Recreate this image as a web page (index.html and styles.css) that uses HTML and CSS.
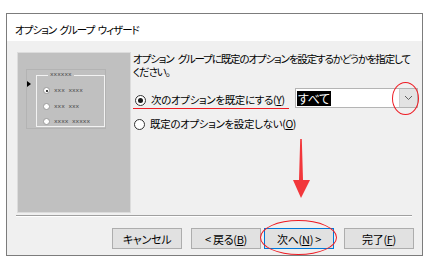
FILE: index.html
```html
<!DOCTYPE html>
<html lang="ja">
<head>
    <meta charset="UTF-8">
    <meta name="viewport" content="width=device-width, initial-scale=1.0">
    <title>オプション グループ ウィザード</title>
    <link rel="stylesheet" href="styles.css">
</head>
<body>
    <div class="window">
        <div class="titlebar">オプション グループ ウィザード</div>

        <div class="main">
            <!-- プレビュー -->
            <div class="preview">
                <div class="mini-wrap">
                    <span class="mini-arrow"></span>
                    <fieldset class="mini-group">
                        <legend>xxxxxx</legend>
                        <div class="mini-row"><span class="mini-radio checked"></span>xxx xxxx</div>
                        <div class="mini-row"><span class="mini-radio"></span>xxx xxx</div>
                        <div class="mini-row"><span class="mini-radio"></span>xxxx xxxxx</div>
                    </fieldset>
                </div>
            </div>

            <div class="panel">
                <p class="desc">オプション&nbsp;グループに既定のオプションを設定するかどうかを指定して<br>ください。</p>

                <div class="option-row first">
                    <label class="option marked">
                        <span class="radio checked"></span>
                        <span class="option-text">次のオプションを既定にする(<u>Y</u>)</span>
                    </label>
                    <div class="combo">
                        <div class="combo-field"><span class="selected">すべて</span></div>
                        <div class="combo-btn">
                            <svg width="9" height="6" viewBox="0 0 9 6"><polyline points="1,1 4.5,4.5 8,1" fill="none" stroke="#606060" stroke-width="1"/></svg>
                        </div>
                    </div>
                </div>

                <div class="option-row second">
                    <label class="option">
                        <span class="radio"></span>
                        <span class="option-text">既定のオプションを設定しない(<u>O</u>)</span>
                    </label>
                </div>
            </div>
        </div>

        <div class="separator"></div>

        <div class="buttons">
            <button class="btn cancel">キャンセル</button>
            <button class="btn back">&lt; 戻る(<u>B</u>)</button>
            <button class="btn next">次へ(<u>N</u>) &gt;</button>
            <button class="btn finish">完了(<u>F</u>)</button>
        </div>

        <!-- 注釈 -->
        <svg class="mark-arrow" width="22" height="62" viewBox="0 0 22 62">
            <path d="M10.2 1 L11.8 1 L13 42 L20 42 L11 60 L3 42 L9 42 Z" fill="#f2373b"/>
        </svg>
        <div class="mark-ring ring-combo"></div>
        <div class="mark-ring ring-next"></div>
    </div>
</body>
</html>
```

FILE: styles.css
```css
* {
    margin: 0;
    padding: 0;
    box-sizing: border-box;
}

body {
    background: #fff;
    font-family: "Noto Sans CJK JP", "Noto Sans", sans-serif;
    font-feature-settings: "palt";
    color: #000;
}

.window {
    position: relative;
    width: 417px;
    height: 243px;
    margin: 13px 0 0 6px;
    border: 1px solid #7c7c7c;
    background: #f0f0f0;
}

.titlebar {
    height: 27px;
    background: #fff;
    font-size: 10.5px;
    padding: 8px 0 0 8px;
    letter-spacing: -1px;
    word-spacing: 2px;
}

.main {
    display: flex;
    height: 174px;
    padding: 11px 0 0 10px;
}

/* プレビュー */
.preview {
    flex-shrink: 0;
    width: 114px;
    height: 161px;
    background: #c0c0c0;
    border: 1px solid #dcdcdc;
    padding: 16px 0 0 8px;
}

.mini-wrap {
    display: flex;
    width: 80px;
    height: 60px;
    border: 1px solid #b3b3b3;
}

.mini-arrow {
    width: 0;
    height: 0;
    margin: 11px 5px 0 0;
    border-left: 4px solid #000;
    border-top: 3px solid transparent;
    border-bottom: 3px solid transparent;
}

.mini-group {
    width: 69px;
    height: 55px;
    margin-top: 2px;
    border: 1px solid #f2f2f2;
    padding: 5px 0 0 6px;
    font-family: "Liberation Mono", monospace;
    font-size: 6px;
    color: #3a3a3a;
}

.mini-group legend {
    margin-left: 5px;
    padding: 0 2px;
    line-height: 6px;
}

.mini-row {
    display: flex;
    align-items: center;
    height: 15.5px;
    gap: 4px;
}

.mini-radio {
    width: 7px;
    height: 7px;
    border-radius: 50%;
    background: #fff;
    border: 1px solid #9a9a9a;
    position: relative;
}

.mini-radio.checked::after {
    content: "";
    position: absolute;
    left: 1.5px;
    top: 1.5px;
    width: 2px;
    height: 2px;
    border-radius: 50%;
    background: #000;
}

/* 右側 */
.panel {
    flex: 1;
    min-width: 0;
    padding: 0 4px 0 2px;
    font-size: 10.5px;
}

.desc {
    line-height: 13px;
    letter-spacing: -1.15px;
    word-spacing: 3px;
    white-space: nowrap;
}

.option-row {
    display: flex;
    align-items: center;
}

.option-row.first {
    margin-top: 10px;
    height: 20px;
}

.option-row.second {
    margin-top: 9px;
    height: 14px;
}

.option {
    display: flex;
    align-items: center;
    gap: 5px;
    line-height: 14px;
    white-space: nowrap;
}

.option-text {
    letter-spacing: -0.35px;
}

.option.marked {
    padding: 3px 4px 1px 1px;
    margin-top: 3px;
    border-bottom: 1.5px solid #ee1c24;
}

.radio {
    width: 11px;
    height: 11px;
    border-radius: 50%;
    border: 1px solid #333;
    background: #fff;
    position: relative;
    margin-left: 1px;
}

.radio.checked::after {
    content: "";
    position: absolute;
    left: 2px;
    top: 2px;
    width: 5px;
    height: 5px;
    border-radius: 50%;
    background: #1a1a1a;
}

.combo {
    display: flex;
    flex-shrink: 0;
    margin-left: auto;
    width: 123px;
    height: 20px;
    border: 1px solid #b4b4b4;
    background: #fff;
}

.combo-field {
    flex: 1;
    padding: 1px 0 0 1px;
    font-size: 12px;
}

.selected {
    display: inline-block;
    background: #000;
    color: #fff;
    line-height: 15px;
    padding: 0 1px;
    letter-spacing: -0.4px;
}

.combo-btn {
    width: 18px;
    background: #e3e3e3;
    border-left: 1px solid #cfcfcf;
    display: flex;
    align-items: center;
    justify-content: center;
}

.separator {
    height: 2px;
    margin: 0 10px 0 9px;
    border-top: 1px solid #a0a0a0;
    border-bottom: 1px solid #fff;
}

.buttons {
    display: flex;
    justify-content: flex-end;
    padding: 11px 8px 0 0;
}

.btn {
    width: 70px;
    height: 21px;
    border: 1px solid #adadad;
    background: #e1e1e1;
    font-family: "Noto Sans CJK JP", "Noto Sans", sans-serif;
    font-feature-settings: "palt";
    font-size: 11px;
    letter-spacing: -0.3px;
    color: #000;
}

.back {
    margin-left: 9px;
}

.next {
    margin-left: 3px;
    border-color: #0078d7;
}

.finish {
    margin-left: 10px;
}

/* 注釈 */
.mark-arrow {
    position: absolute;
    left: 283px;
    top: 124px;
}

.mark-ring {
    position: absolute;
    border: 1.5px solid #ee1c24;
    border-radius: 50%;
}

.ring-combo {
    left: 385px;
    top: 68px;
    width: 27px;
    height: 33px;
}

.ring-next {
    left: 253px;
    top: 206px;
    width: 77px;
    height: 35px;
}
```
